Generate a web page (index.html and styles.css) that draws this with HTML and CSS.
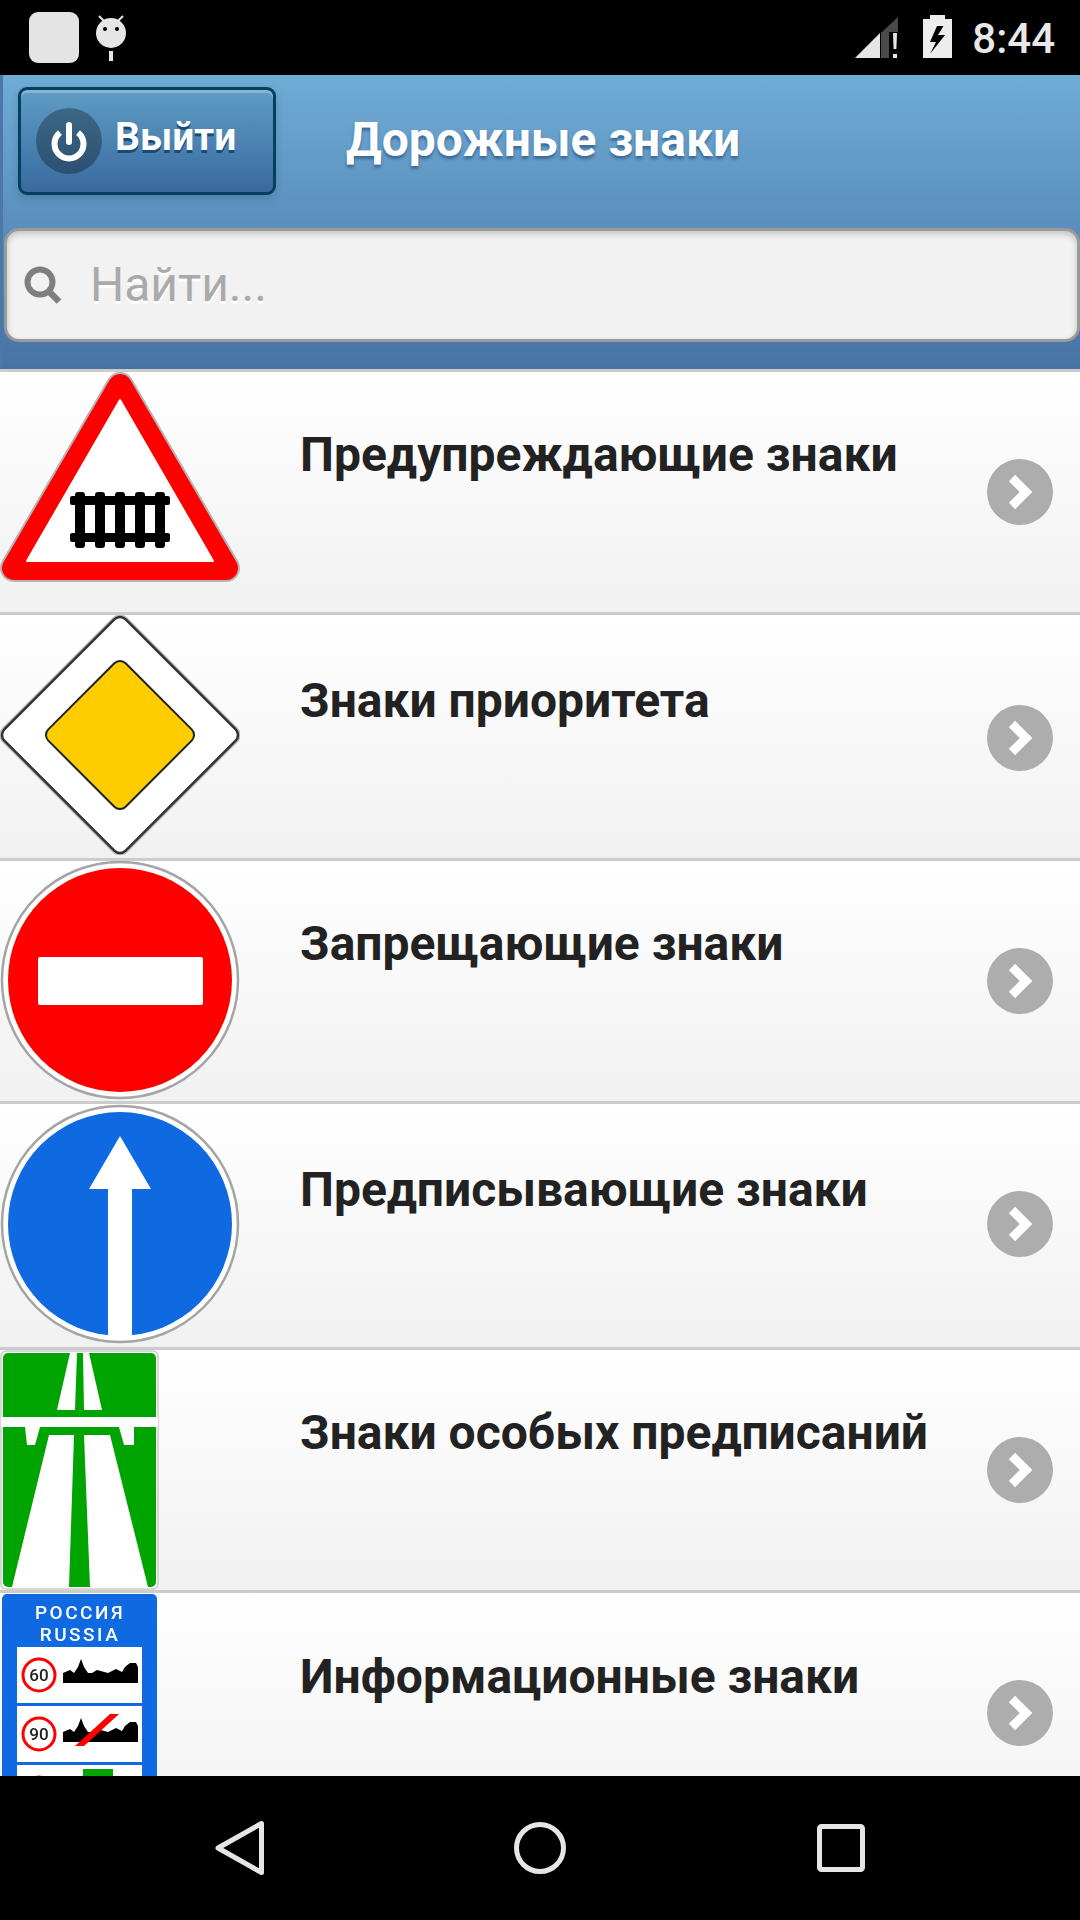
FILE: index.html
```html
<!DOCTYPE html>
<html lang="ru">
<head>
<meta charset="utf-8">
<title>Дорожные знаки</title>
<link rel="stylesheet" href="styles.css">
</head>
<body>
<div class="app">
  <div class="status">
    <div class="status-left">
      <div class="notif-square"></div>
      <svg class="android" viewBox="0 0 34 50" width="34" height="50">
        <circle cx="17" cy="19" r="15" fill="#e6e6e6"/>
        <path d="M5 2l5 5M29 2l-5 5" stroke="#e6e6e6" stroke-width="2" fill="none"/>
        <circle cx="11" cy="15" r="2" fill="#000"/><circle cx="23" cy="15" r="2" fill="#000"/>
        <rect x="15" y="37" width="4" height="10" fill="#e6e6e6"/>
      </svg>
    </div>
    <div class="status-right">
      <svg class="signal" viewBox="855 17 43 41" width="43" height="41">
        <path d="M855 58L880 33V58Z" fill="#e6e6e6"/>
        <path d="M881 33L898 17V32H889V58H881Z" fill="#4a4a4a"/>
        <path d="M893 33H897L896.400 49H893.600Z" fill="#e6e6e6"/>
        <rect x="893" y="54" width="4" height="4" fill="#e6e6e6"/>
      </svg>
      <svg class="battery" viewBox="923 15 29 43" width="29" height="43">
        <path d="M930 15H945V19H952V58H923V19H930Z" fill="#ededed"/>
        <path d="M937 26L930 42H936L930 54L945 35H938L943.500 26Z" fill="#000"/>
      </svg>
      <span class="time">8:44</span>
    </div>
  </div>

  <main class="main">
    <header class="header">
      <div class="header-top">
        <a class="logout">
          <span class="logout-icon">
            <svg viewBox="0 0 40 44" width="40" height="44">
              <path d="M11 13.600A14.500 14.500 0 1 0 29 13.600" fill="none" stroke="#fff" stroke-width="6"/>
              <path d="M20 6V23" stroke="#fff" stroke-width="6" stroke-linecap="round"/>
            </svg>
          </span>
          <span class="logout-text">Выйти</span>
        </a>
        <h1 class="title">Дорожные знаки</h1>
      </div>
      <div class="search">
        <svg class="search-icon" viewBox="0 0 38 38" width="38" height="38">
          <circle cx="16" cy="16" r="12.500" fill="none" stroke="#7f7f7f" stroke-width="6"/>
          <path d="M24.500 25L35 35.500" stroke="#7f7f7f" stroke-width="6.500"/>
        </svg>
        <span class="placeholder">Найти...</span>
      </div>
    </header>

    <ul class="list">
      <li class="row">
        <div class="thumb">
          <svg class="sign" viewBox="0 0 240 240" width="240" height="240">
            <path d="M120 14L14 196H226Z" fill="#b5b5b5" stroke="#b5b5b5" stroke-width="28" stroke-linejoin="round"/>
            <path d="M120 14L14 196H226Z" fill="#f00" stroke="#f00" stroke-width="24" stroke-linejoin="round"/>
            <path d="M120 28L27 189H213Z" fill="#fff" stroke="#fff" stroke-width="2" stroke-linejoin="round"/>
            <g fill="#000">
              <rect x="70" y="124" width="100" height="9" rx="2"/>
              <rect x="70" y="161" width="100" height="9" rx="2"/>
              <rect x="75" y="120" width="10" height="56" rx="3"/>
              <rect x="95" y="120" width="10" height="56" rx="3"/>
              <rect x="115" y="120" width="10" height="56" rx="3"/>
              <rect x="135" y="120" width="10" height="56" rx="3"/>
              <rect x="155" y="120" width="10" height="56" rx="3"/>
            </g>
          </svg>
        </div>
        <span class="label">Предупреждающие знаки</span>
        <span class="chev"><svg viewBox="-33 -33 66 66" width="66" height="66"><path d="M-8 -14L6 0L-8 14" fill="none" stroke="#fff" stroke-width="9"/></svg></span>
      </li>
      <li class="row">
        <div class="thumb">
          <svg class="sign" viewBox="0 0 240 240" width="240" height="240">
            <g transform="rotate(45 120 120)">
              <rect x="34.200" y="34.200" width="171.600" height="171.600" rx="8" fill="#fff" stroke="#bbb" stroke-width="5"/>
              <rect x="34.200" y="34.200" width="171.600" height="171.600" rx="8" fill="#fff" stroke="#333" stroke-width="2.500"/>
              <rect x="65.300" y="65.300" width="109.400" height="109.400" rx="8" fill="#fc0" stroke="#222" stroke-width="2"/>
            </g>
          </svg>
        </div>
        <span class="label">Знаки приоритета</span>
        <span class="chev"><svg viewBox="-33 -33 66 66" width="66" height="66"><path d="M-8 -14L6 0L-8 14" fill="none" stroke="#fff" stroke-width="9"/></svg></span>
      </li>
      <li class="row">
        <div class="thumb">
          <svg class="sign" viewBox="0 0 240 240" width="240" height="240">
            <circle cx="120" cy="119" r="118" fill="#fff" stroke="#a5a5a5" stroke-width="2.500"/>
            <circle cx="120" cy="119" r="112" fill="#f00"/>
            <rect x="38" y="96" width="165" height="48" rx="2" fill="#fff"/>
          </svg>
        </div>
        <span class="label">Запрещающие знаки</span>
        <span class="chev"><svg viewBox="-33 -33 66 66" width="66" height="66"><path d="M-8 -14L6 0L-8 14" fill="none" stroke="#fff" stroke-width="9"/></svg></span>
      </li>
      <li class="row">
        <div class="thumb">
          <svg class="sign" viewBox="0 0 240 240" width="240" height="240">
            <circle cx="120" cy="120" r="118" fill="#fff" stroke="#a5a5a5" stroke-width="2.500"/>
            <circle cx="120" cy="120" r="112" fill="#0f69e1"/>
            <path d="M120 32L151 85H132V236H108V85H89Z" fill="#fff"/>
          </svg>
        </div>
        <span class="label">Предписывающие знаки</span>
        <span class="chev"><svg viewBox="-33 -33 66 66" width="66" height="66"><path d="M-8 -14L6 0L-8 14" fill="none" stroke="#fff" stroke-width="9"/></svg></span>
      </li>
      <li class="row">
        <div class="thumb">
          <svg class="sign" viewBox="0 0 240 240" width="240" height="240">
            <rect x="1" y="1" width="157" height="238" rx="5" fill="#fff" stroke="#ccc" stroke-width="1.500"/>
            <rect x="3" y="3" width="153" height="234" rx="5" fill="#00a400"/>
            <path d="M70 3H77L75 60H57Z" fill="#fff"/>
            <path d="M83 3H89L102 60H84Z" fill="#fff"/>
            <rect x="1" y="67" width="157" height="10" fill="#fff"/>
            <path d="M25 77H40L35 95H27Z" fill="#fff"/>
            <path d="M119 77H134V95H124Z" fill="#fff"/>
            <path d="M49 85H74L69 237H12Z" fill="#fff"/>
            <path d="M84 85H110L148 237H90Z" fill="#fff"/>
          </svg>
        </div>
        <span class="label">Знаки особых предписаний</span>
        <span class="chev"><svg viewBox="-33 -33 66 66" width="66" height="66"><path d="M-8 -14L6 0L-8 14" fill="none" stroke="#fff" stroke-width="9"/></svg></span>
      </li>
      <li class="row">
        <div class="thumb">
          <svg class="sign" viewBox="0 0 240 240" width="240" height="240">
            <rect x="2" y="1" width="155" height="238" rx="5" fill="#0f69e1"/>
            <text class="sign-cap" x="80" y="26">РОССИЯ</text>
            <text class="sign-cap" x="80" y="48">RUSSIA</text>
            <rect x="17" y="54" width="125" height="56" fill="#fff"/>
            <rect x="17" y="113" width="125" height="56" fill="#fff"/>
            <rect x="17" y="172" width="125" height="56" fill="#fff"/>
            <circle cx="39" cy="82" r="16" fill="#fff" stroke="#f00" stroke-width="3"/>
            <circle cx="39" cy="141" r="16" fill="#fff" stroke="#f00" stroke-width="3"/>
            <circle cx="39" cy="200" r="16" fill="#fff" stroke="#f00" stroke-width="3"/>
            <text class="sign-num" x="39" y="88">60</text>
            <text class="sign-num" x="39" y="147">90</text>
            <path d="M63 90V80L70 77L74 80L78 74L81 66L84 74L88 80L92 80L97 77L108 80L116 76L122 79L125 74L130 70L136 70L138 74V90Z" fill="#000"/>
            <path d="M63 149V139L70 136L74 139L78 133L81 125L84 133L88 139L92 139L97 136L108 139L116 135L122 138L125 133L130 129L136 129L138 133V149Z" fill="#000"/>
            <path d="M75 153L110 121L119 121L84 153Z" fill="#f00"/>
            <rect x="83" y="176" width="30" height="20" fill="#00a400"/>
          </svg>
        </div>
        <span class="label">Информационные знаки</span>
        <span class="chev"><svg viewBox="-33 -33 66 66" width="66" height="66"><path d="M-8 -14L6 0L-8 14" fill="none" stroke="#fff" stroke-width="9"/></svg></span>
      </li>
    </ul>
  </main>

  <nav class="nav">
    <svg class="nav-back" viewBox="0 0 50 56" width="50" height="56">
      <path d="M46.500 3.500V52.500L3 28Z" fill="none" stroke="#e6e6e6" stroke-width="5" stroke-linejoin="round"/>
    </svg>
    <svg class="nav-home" viewBox="0 0 52 52" width="52" height="52">
      <circle cx="26" cy="26" r="23.500" fill="none" stroke="#e6e6e6" stroke-width="5"/>
    </svg>
    <svg class="nav-recent" viewBox="0 0 48 48" width="48" height="48">
      <rect x="2.500" y="2.500" width="43" height="43" rx="2" fill="none" stroke="#e6e6e6" stroke-width="5"/>
    </svg>
  </nav>
</div>
</body>
</html>
```

FILE: styles.css
```css
* { box-sizing: border-box; }
html, body { margin: 0; padding: 0; background: #000; }
body { font-family: Roboto, "Liberation Sans", sans-serif; }

.app {
  width: 1080px;
  height: 1920px;
  display: flex;
  flex-direction: column;
  overflow: hidden;
}

/* status bar */
.status {
  height: 75px;
  flex: none;
  background: #000;
  display: flex;
  justify-content: space-between;
  align-items: flex-start;
  padding: 12px 25px 0 29px;
}
.status-left { display: flex; align-items: flex-start; }
.notif-square { width: 50px; height: 51px; border-radius: 9px; background: #e4e4e4; }
.android { margin: 2px 0 0 15px; }
.status-right { display: flex; align-items: flex-start; }
.signal { margin-top: 5px; }
.battery { margin: 3px 0 0 25px; }
.time {
  margin: 3px 0 0 20px;
  font-size: 42px;
  line-height: 47px;
  font-weight: 500;
  color: #e8e8e8;
}

/* main column */
.main { flex: 1; min-height: 0; overflow: hidden; background: #f2f2f2; }

.header {
  height: 297px;
  padding: 12px 0 0 4px;
  border-bottom: 3px solid #ccc;
  background: linear-gradient(#6facd5, #4872a5);
  box-shadow: inset 3px 0 0 #4a78a8, inset 0 -3px 0 #47719f;
}
.header-top { display: flex; align-items: flex-start; padding-left: 14px; }

.logout {
  width: 258px;
  height: 108px;
  border: 3px solid #044062;
  border-radius: 9px;
  background: linear-gradient(#5f9cc5, #396a9f);
  box-shadow: inset 0 3px 0 rgba(255,255,255,.25), 0 3px 9px rgba(0,0,0,.15);
  display: flex;
  align-items: center;
  padding-left: 15px;
}
.logout-icon {
  width: 66px;
  height: 66px;
  border-radius: 50%;
  background: rgba(0,0,0,.3);
  display: flex;
  align-items: center;
  justify-content: center;
  flex: none;
}
.logout-text {
  margin: 0 0 9px 13px;
  font-size: 39px;
  font-weight: 700;
  color: #fff;
  text-shadow: 0 3px 0 #194a7a;
}
.title {
  margin: 25px 0 0 70px;
  font-size: 48px;
  line-height: 56px;
  font-weight: 700;
  color: #fff;
  text-shadow: 0 3px 3px #3a6a97;
}

.search {
  margin-top: 33px;
  height: 114px;
  border: 3px solid #9a9a9a;
  border-radius: 15px;
  background: #f2f2f2;
  box-shadow: inset 0 3px 6px rgba(0,0,0,.2);
  display: flex;
  align-items: center;
  padding-left: 17px;
}
.search-icon { flex: none; }
.placeholder {
  margin: 0 0 2px 28px;
  font-size: 48px;
  color: #aaa;
  text-shadow: 0 3px 0 #fff;
}

/* list */
.list { list-style: none; margin: 0; padding: 0; }
.row {
  height: 243px;
  border-bottom: 3px solid #ccc;
  background: linear-gradient(#fff, #f1f1f1);
  display: flex;
  align-items: flex-start;
}
.row:nth-child(even) { height: 246px; }
.thumb { width: 300px; flex: none; }
.sign { display: block; filter: blur(.6px); }
.label {
  flex: 1;
  margin-top: 53px;
  font-size: 48px;
  line-height: 60px;
  font-weight: 700;
  color: #222;
  white-space: nowrap;
}
.row:nth-child(2) .label,
.row:nth-child(4) .label { margin-top: 56px; }
.row:nth-child(6) .label { margin-top: 54px; }
.chev {
  width: 66px;
  height: 66px;
  margin: 87px 27px 0 0;
  border-radius: 50%;
  background: #adadad;
  flex: none;
}
.row:nth-child(2) .chev { margin-top: 90px; }
.chev svg { display: block; }

.sign-cap {
  font-family: Roboto, "DejaVu Sans", sans-serif;
  font-size: 19px;
  font-weight: 500;
  letter-spacing: 2.500px;
  fill: #fff;
  text-anchor: middle;
}
.sign-num {
  font-family: Roboto, sans-serif;
  font-size: 17px;
  font-weight: 500;
  fill: #222;
  text-anchor: middle;
}

/* nav bar */
.nav {
  height: 144px;
  flex: none;
  background: #000;
  display: flex;
  align-items: flex-start;
  padding: 44px 0 0 215px;
}
.nav-home { margin: 2px 0 0 249px; }
.nav-recent { margin: 4px 0 0 251px; }
```
